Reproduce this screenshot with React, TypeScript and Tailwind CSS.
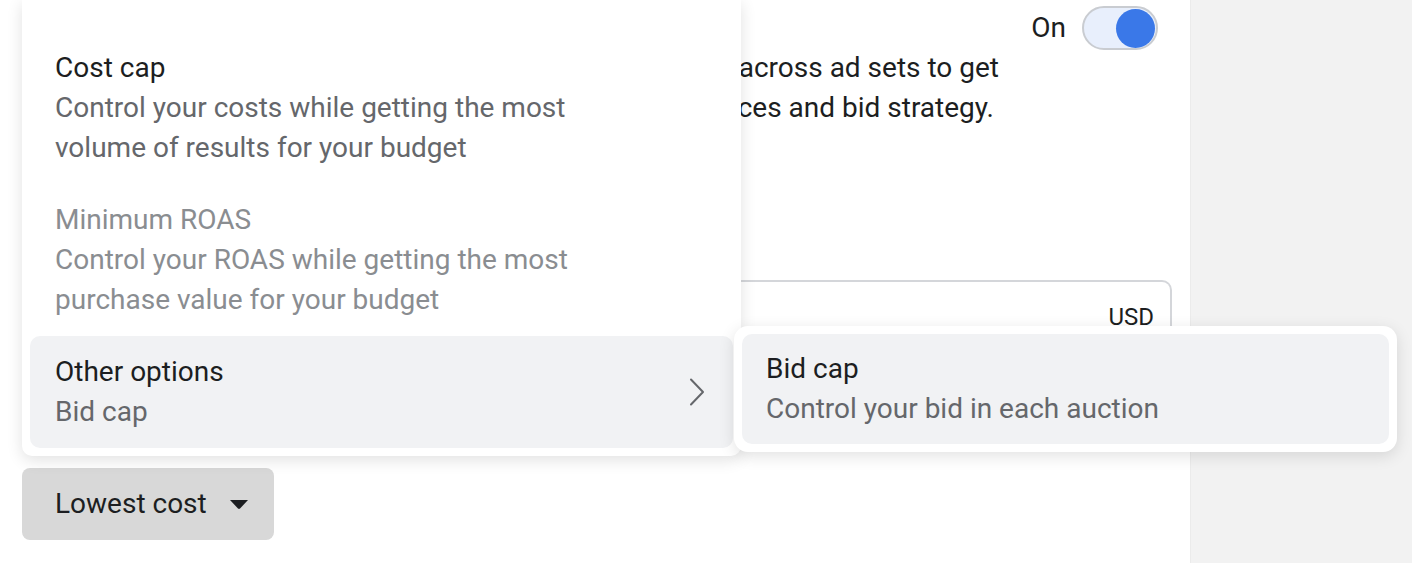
import React from 'react';

const font = { fontFamily: 'Roboto, "Noto Sans", Arial, sans-serif' };

function MenuItem({
  title,
  lines,
  disabled,
  active,
  chevron,
}: {
  title: string;
  lines: string[];
  disabled?: boolean;
  active?: boolean;
  chevron?: boolean;
}) {
  return (
    <div
      className={`mx-[8px] flex items-center rounded-[10px] py-[16px] pl-[25px] pr-[28px] ${
        active ? 'bg-[#f1f2f4]' : ''
      }`}
    >
      <div className="flex-1 text-[28px] leading-[40px]">
        <div className={disabled ? 'text-[#8a8d91]' : 'text-[#1c1e21]'}>{title}</div>
        {lines.map((l) => (
          <div key={l} className={disabled ? 'text-[#8a8d91]' : 'text-[#65676b]'}>
            {l}
          </div>
        ))}
      </div>
      {chevron && (
        <svg width="16" height="28" viewBox="0 0 16 28" fill="none">
          <path d="M2 1.5 L14 14 L2 26.5" stroke="#65676b" strokeWidth="2" strokeLinecap="round" strokeLinejoin="round" />
        </svg>
      )}
    </div>
  );
}

export default function App() {
  return (
    <div className="relative flex h-[563px] w-[1412px] overflow-hidden bg-[#f2f2f2]" style={font}>
      {/* main panel */}
      <div className="flex w-[1190px] flex-col bg-white pl-[22px]">
        <div className="mt-[6px] flex h-[44px] items-center justify-end gap-[16px] pr-[32px]">
          <span className="text-[28px] text-[#1c1e21]">On</span>
          <div className="flex h-[44px] w-[76px] items-center justify-end rounded-full border-2 border-[#c9ccd1] bg-[#e8effc] pr-[1px]">
            <div className="h-[39px] w-[39px] rounded-full bg-[#3a78e8]" />
          </div>
        </div>
        {/* description, left part sits under the open menu */}
        <div className="-mt-[2px] ml-[719px] w-[258px] overflow-hidden whitespace-nowrap text-[28px] leading-[40px] text-[#1c1e21]">
          <div className="flex justify-end">
            <span>Distribute your budget across ad sets to get</span>
          </div>
          <div className="flex justify-end pr-[5px]">
            <span>more results depending on your delivery optimisation choices and bid strategy.</span>
          </div>
        </div>
        <div className="ml-[719px] mt-[152px] flex h-[90px] w-[431px] items-start justify-end rounded-r-[10px] border-2 border-l-0 border-[#d4d6da] pr-[16px] pt-[20px]">
          <span className="text-[24px] leading-[30px] text-[#1c1e21]">USD</span>
        </div>
        <div className="mt-[98px] flex h-[72px] w-[252px] items-center gap-[23px] rounded-[8px] bg-[#d8d8d8] pl-[33px]">
          <span className="text-[28px] text-[#1c1e21]">Lowest cost</span>
          <svg width="18" height="9" viewBox="0 0 18 9">
            <path d="M0 0 H18 L10 8.5 Q9 9.3 8 8.5 Z" fill="#1c1e21" />
          </svg>
        </div>
      </div>
      <div className="flex-1 border-l border-[#ebebeb]" />

      {/* dropdown menu */}
      <div className="absolute left-[22px] top-0 w-[719px] rounded-b-[10px] bg-white pb-[8px] pt-[32px] shadow-[0_4px_16px_rgba(0,0,0,0.12)]">
        <MenuItem title="Cost cap" lines={['Control your costs while getting the most', 'volume of results for your budget']} />
        <MenuItem title="Minimum ROAS" lines={['Control your ROAS while getting the most', 'purchase value for your budget']} disabled />
        <MenuItem title="Other options" lines={['Bid cap']} active chevron />
      </div>

      {/* submenu */}
      <div className="absolute left-[734px] top-[326px] w-[663px] rounded-[14px] bg-white p-[8px] shadow-[0_4px_16px_rgba(0,0,0,0.12)]">
        <div className="rounded-[10px] bg-[#f1f2f4] px-[24px] py-[15px] text-[28px] leading-[40px]">
          <div className="text-[#1c1e21]">Bid cap</div>
          <div className="text-[#65676b]">Control your bid in each auction</div>
        </div>
      </div>
    </div>
  );
}
